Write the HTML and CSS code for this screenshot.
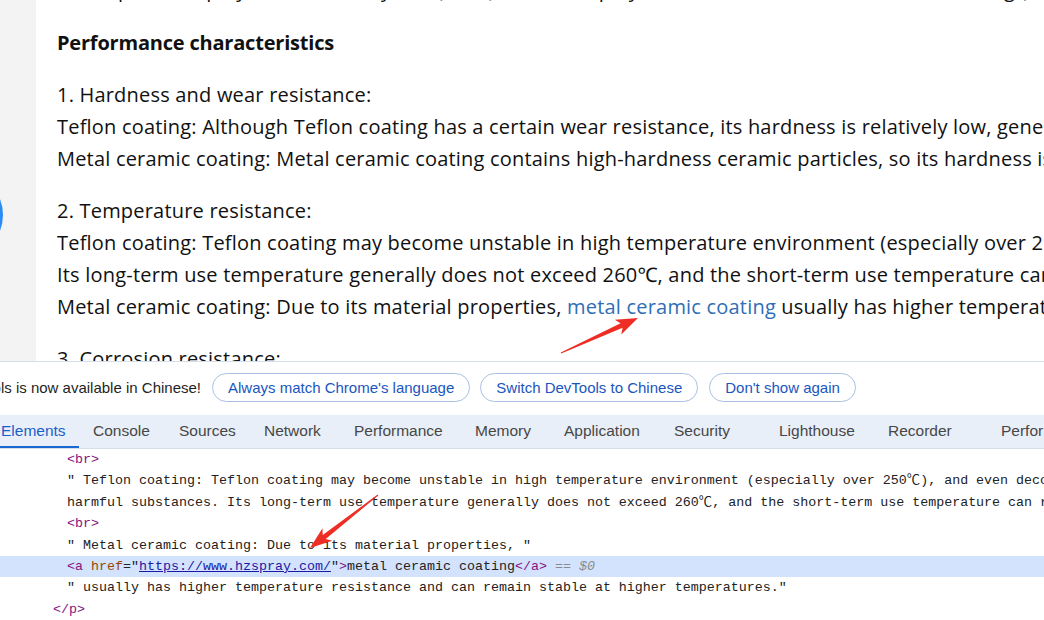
FILE: index.html
```html
<!DOCTYPE html>
<html lang="en">

<head>
  <meta charset="UTF-8">
  <title>Metal ceramic coating vs Teflon coating</title>
  <link rel="stylesheet" href="styles.css">
</head>

<body>
  <div class="page">
    <div class="rail">
      <span class="rail-fab"></span>
    </div>
    <div class="article">
      <p class="lead">is composed of polytetrafluoroethylene (PTFE) and other polymer resins, while metal ceramic coating (cermet) is applied by thermal spray</p>
      <h3>Performance characteristics</h3>
      <p>1. Hardness and wear resistance:<br>
        Teflon coating: Although Teflon coating has a certain wear resistance, its hardness is relatively low, generally only HB level.<br>
        Metal ceramic coating: Metal ceramic coating contains high-hardness ceramic particles, so its hardness is much higher.</p>
      <p>2. Temperature resistance:<br>
        Teflon coating: Teflon coating may become unstable in high temperature environment (especially over 250℃), and even decompose.<br>
        Its long-term use temperature generally does not exceed 260℃, and the short-term use temperature can reach 300℃.<br>
        Metal ceramic coating: Due to its material properties, <a href="#">metal ceramic coating</a> usually has higher temperature resistance.</p>
      <p>3. Corrosion resistance:</p>
    </div>
  </div>

  <div class="devtools">
    <div class="infobar">
      <div class="infobar-msg"><span>DevTools is now available in Chinese!</span></div>
      <button class="pill">Always match Chrome's language</button>
      <button class="pill">Switch DevTools to Chinese</button>
      <button class="pill">Don't show again</button>
    </div>

    <div class="tabs">
      <div class="tab active">Elements</div>
      <div class="tab">Console</div>
      <div class="tab">Sources</div>
      <div class="tab">Network</div>
      <div class="tab">Performance</div>
      <div class="tab">Memory</div>
      <div class="tab">Application</div>
      <div class="tab">Security</div>
      <div class="tab">Lighthouse</div>
      <div class="tab">Recorder</div>
      <div class="tab">Performance insights</div>
    </div>

    <div class="tree">
      <div class="row"><span class="tag">&lt;br&gt;</span></div>
      <div class="row">" Teflon coating: Teflon coating may become unstable in high temperature environment (especially over 250℃), and even decompose and release</div>
      <div class="row">harmful substances. Its long-term use temperature generally does not exceed 260℃, and the short-term use temperature can reach 300℃.</div>
      <div class="row"><span class="tag">&lt;br&gt;</span></div>
      <div class="row">" Metal ceramic coating: Due to its material properties, "</div>
      <div class="row selected"><span class="tag">&lt;a</span> <span class="attr">href</span>="<span class="val">https://www.hzspray.com/</span>"<span class="tag">&gt;</span>metal ceramic coating<span class="tag">&lt;/a&gt;</span> <span class="ref">== $0</span></div>
      <div class="row">" usually has higher temperature resistance and can remain stable at higher temperatures."</div>
      <div class="row row-close"><span class="tag">&lt;/p&gt;</span></div>
    </div>
  </div>

  <svg class="marks" width="1044" height="620" viewBox="0 0 1044 620">
    <polygon points="561.2,353.5 622.6,327.8 621.3,334.4 638,318 614.7,319.8 620.6,323.2 560.8,352.5" />
    <polygon points="378.3,495.4 325.7,538.9 332.3,540.8 310,548 322.5,528.2 322.7,534.9 377.7,494.6" />
  </svg>
</body>

</html>
```

FILE: styles.css
```css
* {
  margin: 0;
  padding: 0;
  box-sizing: border-box;
}

body {
  width: 1044px;
  height: 620px;
  overflow: hidden;
  background-color: #fff;
  position: relative;
}

/* page content */

.page {
  display: flex;
  height: 361px;
  overflow: hidden;
}

.rail {
  width: 36px;
  flex-shrink: 0;
  background-color: #f3f3f3;
  position: relative;
}

.rail-fab {
  position: absolute;
  left: -85px;
  top: 171px;
  width: 88px;
  height: 88px;
  border-radius: 50%;
  background-color: #2a8bf2;
}

.article {
  flex: 1;
  padding-left: 21px;
  overflow: hidden;
  font-family: 'Open Sans', 'Noto Sans', sans-serif;
  font-size: 20px;
  line-height: 32px;
  letter-spacing: 0.2px;
  color: #111;
  white-space: nowrap;
}

.article p {
  margin-bottom: 20px;
}

.article .lead {
  margin-top: -26px;
  margin-bottom: 0;
}

.article h3 {
  margin: 21px 0 20px;
  font-size: 20px;
  font-weight: 700;
  letter-spacing: -0.2px;
}

.article a {
  color: #2f6db5;
  text-decoration: none;
}

/* devtools */

.devtools {
  border-top: 1px solid #d5dfec;
  font-family: 'Liberation Sans', Arial, sans-serif;
}

.infobar {
  height: 53px;
  display: flex;
  align-items: center;
  padding-bottom: 2px;
}

.infobar-msg {
  width: 201px;
  margin-right: 11px;
  display: flex;
  justify-content: flex-end;
  overflow: hidden;
  white-space: nowrap;
  font-size: 15px;
  color: #1f1f1f;
}

.pill {
  height: 29px;
  padding: 0 15px;
  margin-right: 10px;
  border: 1px solid #a9c0e2;
  border-radius: 15px;
  background-color: #fff;
  color: #1a56c0;
  font-family: 'Liberation Sans', Arial, sans-serif;
  font-size: 15px;
  white-space: nowrap;
}

.pill:last-child {
  margin-left: 1px;
}

.tabs {
  height: 34px;
  display: flex;
  margin-left: -13px;
  background-color: #e9eff8;
  border-bottom: 1px solid #d5dfec;
  white-space: nowrap;
}

.tab {
  flex-shrink: 0;
  padding-left: 14px;
  font-size: 15.5px;
  line-height: 31px;
  color: #474747;
  border-bottom: 2px solid transparent;
}

.tab:nth-child(1) { width: 92px; }
.tab:nth-child(2) { width: 86px; }
.tab:nth-child(3) { width: 85px; }
.tab:nth-child(4) { width: 90px; }
.tab:nth-child(5) { width: 121px; }
.tab:nth-child(6) { width: 89px; }
.tab:nth-child(7) { width: 110px; }
.tab:nth-child(8) { width: 105px; }
.tab:nth-child(9) { width: 109px; }
.tab:nth-child(10) { width: 113px; }

.tab.active {
  color: #1a5fc8;
  border-bottom-color: #1a67d2;
}

.tree {
  font-family: 'Liberation Mono', 'Noto Sans CJK SC', monospace;
  font-size: 13.33px;
  color: #222;
  white-space: nowrap;
  overflow: hidden;
}

.row {
  height: 21.4px;
  line-height: 21.4px;
  padding-left: 67px;
}

.row.selected {
  background-color: #d3e3fd;
}

.row-close {
  padding-left: 53px;
}

.tag {
  color: #881280;
}

.attr {
  color: #994500;
}

.val {
  color: #1a1aa6;
  text-decoration: underline;
}

.ref {
  color: #8a8a8a;
  font-style: italic;
}

/* annotation arrows */

.marks {
  position: absolute;
  left: 0;
  top: 0;
  pointer-events: none;
}

.marks polygon {
  fill: #ee2d24;
}
```
